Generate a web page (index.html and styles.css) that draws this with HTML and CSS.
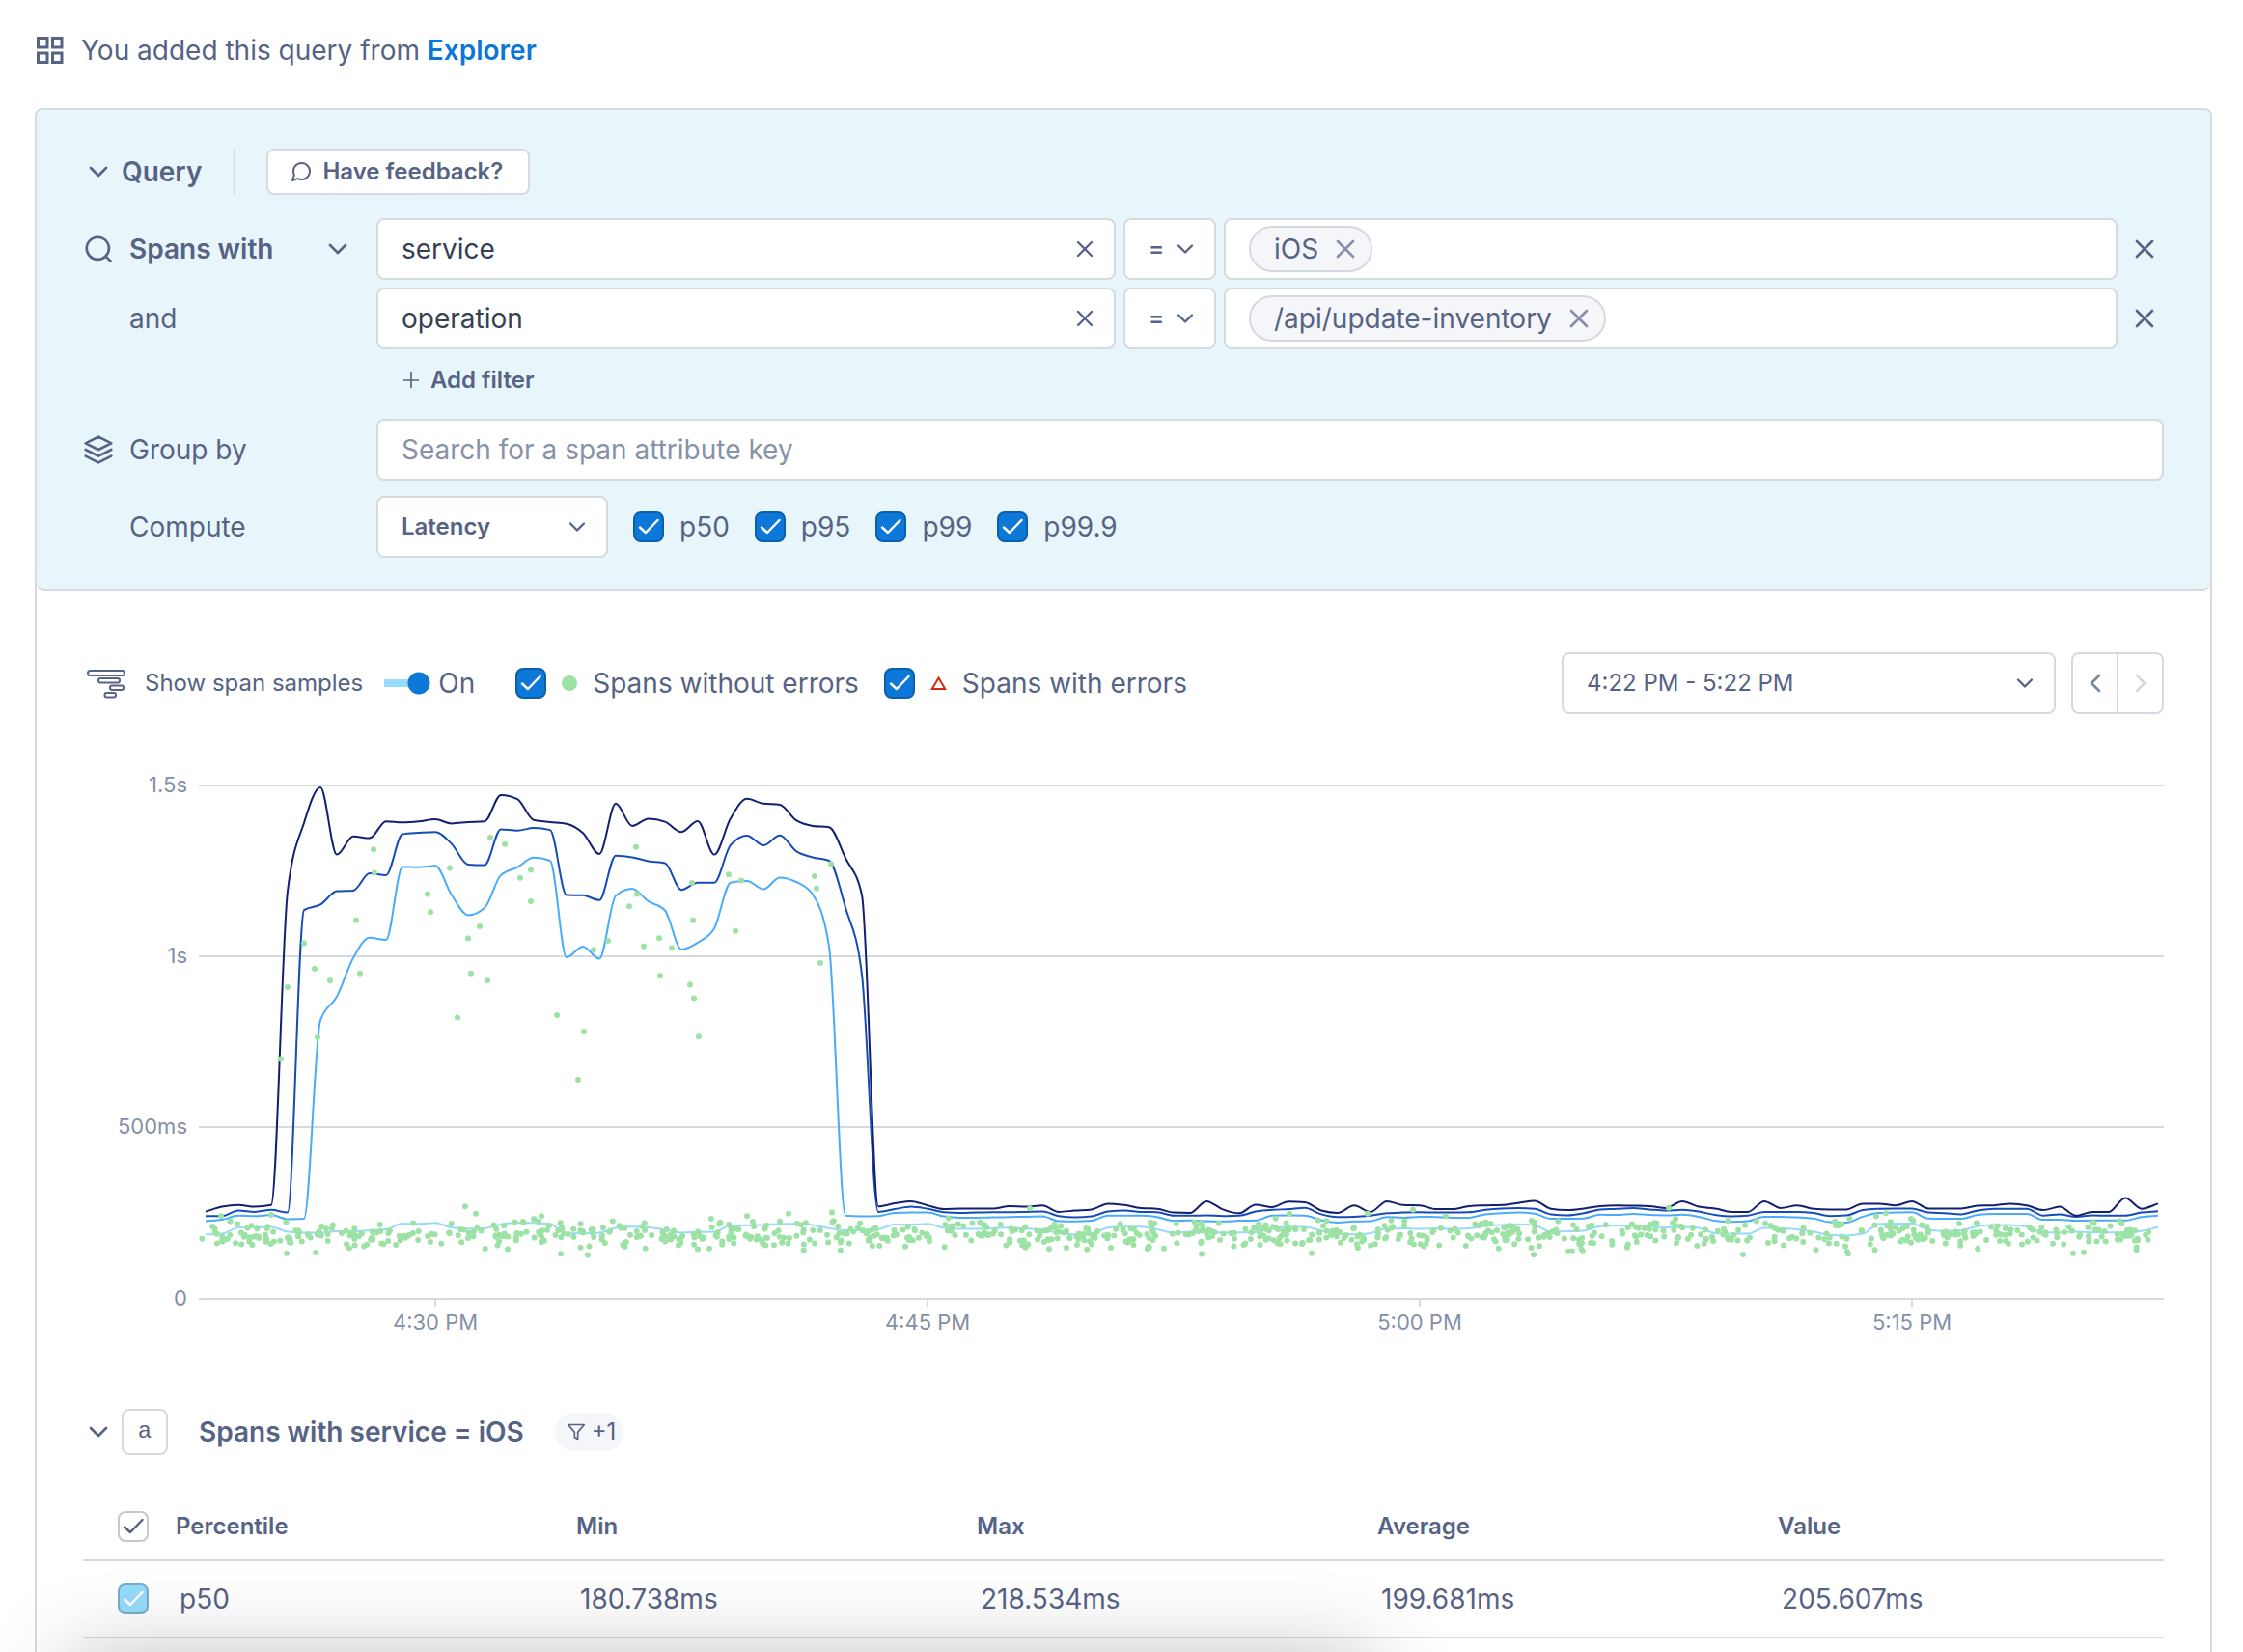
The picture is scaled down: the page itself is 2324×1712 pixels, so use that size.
FILE: index.html
```html
<!DOCTYPE html>
<html lang="en">
<head>
    <meta charset="UTF-8">
    <title>Query</title>
    <meta name="viewport" content="width=device-width, initial-scale=1.0">
    <link rel="stylesheet" href="styles.css">
</head>
<body>
    <!-- shared icons -->
    <svg class="sprite" aria-hidden="true">
        <symbol id="chevron-down" viewBox="0 0 24 24"><path d="M6 9l6 6 6-6"/></symbol>
        <symbol id="chevron-left" viewBox="0 0 24 24"><path d="M15 18l-6-6 6-6"/></symbol>
        <symbol id="chevron-right" viewBox="0 0 24 24"><path d="M9 18l6-6-6-6"/></symbol>
        <symbol id="close" viewBox="0 0 24 24"><path d="M18 6L6 18M6 6l12 12"/></symbol>
        <symbol id="plus" viewBox="0 0 24 24"><path d="M12 3v18M3 12h18"/></symbol>
        <symbol id="search" viewBox="0 0 24 24"><circle cx="11.5" cy="11.5" r="8.7"/><path d="M21.5 21.5l-3.8-3.8"/></symbol>
        <symbol id="layers" viewBox="0 0 24 24"><path d="M12 2L2 7l10 5 10-5zM2 17l10 5 10-5M2 12l10 5 10-5"/></symbol>
        <symbol id="message" viewBox="0 0 24 24"><path d="M21 11.5a8.38 8.38 0 0 1-.9 3.8 8.5 8.5 0 0 1-7.6 4.7 8.38 8.38 0 0 1-3.8-.9L3 21l1.9-5.7a8.38 8.38 0 0 1-.9-3.8 8.5 8.5 0 0 1 4.7-7.6 8.38 8.38 0 0 1 3.8-.9h.5a8.48 8.48 0 0 1 8 8z"/></symbol>
        <symbol id="filter" viewBox="0 0 24 24"><path d="M22 3H2l8 9.46V19l4 2v-8.54z"/></symbol>
        <symbol id="grid" viewBox="0 0 32 32"><path d="M3.5 3.5H13V13H3.5zM18.500 3.500H28V13h-9.500zM3.500 19H13v9.500H3.500zM18.500 19H28v9.500h-9.500z"/></symbol>
    </svg>

    <div class="page">
        <p class="notice">
            <svg class="icon"><use href="#grid"/></svg>
            <span>You added this query from <a href="#explorer">Explorer</a></span>
        </p>

        <main class="panel">
            <section class="query">
                <div class="query-head">
                    <button class="toggle-btn" type="button"><svg class="icon"><use href="#chevron-down"/></svg>Query</button>
                    <button class="feedback" type="button"><svg class="icon icon-s"><use href="#message"/></svg>Have feedback?</button>
                </div>

                <div class="row">
                    <button class="row-label spans-btn" type="button">
                        <svg class="icon"><use href="#search"/></svg>Spans with
                        <svg class="icon push"><use href="#chevron-down"/></svg>
                    </button>
                    <div class="filter">
                        <div class="field">
                            <input class="box" type="text" value="service" aria-label="Attribute key">
                            <button class="clear" type="button" aria-label="Clear key"><svg class="icon icon-m"><use href="#close"/></svg></button>
                        </div>
                        <div class="field">
                            <select class="box" aria-label="Operator"><option>=</option><option>!=</option></select>
                            <svg class="icon icon-m arrow"><use href="#chevron-down"/></svg>
                        </div>
                        <div class="box values">
                            <span class="tag">iOS<button type="button" aria-label="Remove iOS"><svg class="icon"><use href="#close"/></svg></button></span>
                        </div>
                        <button class="remove" type="button" aria-label="Remove filter"><svg class="icon"><use href="#close"/></svg></button>
                    </div>
                </div>

                <div class="row row-and">
                    <span class="row-label no-icon">and</span>
                    <div class="filter">
                        <div class="field">
                            <input class="box" type="text" value="operation" aria-label="Attribute key">
                            <button class="clear" type="button" aria-label="Clear key"><svg class="icon icon-m"><use href="#close"/></svg></button>
                        </div>
                        <div class="field">
                            <select class="box" aria-label="Operator"><option>=</option><option>!=</option></select>
                            <svg class="icon icon-m arrow"><use href="#chevron-down"/></svg>
                        </div>
                        <div class="box values">
                            <span class="tag">/api/update-inventory<button type="button" aria-label="Remove /api/update-inventory"><svg class="icon"><use href="#close"/></svg></button></span>
                        </div>
                        <button class="remove" type="button" aria-label="Remove filter"><svg class="icon"><use href="#close"/></svg></button>
                    </div>
                </div>

                <div class="row row-add">
                    <span></span>
                    <button class="add-filter" type="button"><svg class="icon icon-xs"><use href="#plus"/></svg>Add filter</button>
                </div>

                <div class="row">
                    <label class="row-label" for="groupBy"><svg class="icon"><use href="#layers"/></svg>Group by</label>
                    <input class="box" id="groupBy" type="text" placeholder="Search for a span attribute key">
                </div>

                <div class="row row-compute">
                    <label class="row-label no-icon" for="compute">Compute</label>
                    <div class="compute">
                        <div class="field latency">
                            <select class="box" id="compute"><option>Latency</option><option>Rate</option></select>
                            <svg class="icon icon-m arrow"><use href="#chevron-down"/></svg>
                        </div>
                        <label class="check"><input type="checkbox" checked>p50</label>
                        <label class="check"><input type="checkbox" checked>p95</label>
                        <label class="check"><input type="checkbox" checked>p99</label>
                        <label class="check"><input type="checkbox" checked>p99.9</label>
                    </div>
                </div>
            </section>

            <section class="results">
                <div class="toolbar">
                    <svg class="spans-icon" viewBox="0 0 48 32">
                        <rect x="5" y="3" width="38" height="5" rx="2.500"/>
                        <rect x="16" y="11" width="22" height="4.500" rx="2"/>
                        <rect x="28" y="18.500" width="14" height="4.500" rx="2"/>
                        <rect x="22.500" y="26" width="11.500" height="4.500" rx="2"/>
                    </svg>
                    <label class="samples-label" for="samples">Show span samples</label>
                    <input class="switch" id="samples" type="checkbox" role="switch" checked>
                    <span class="on">On</span>
                    <label class="check legend"><input type="checkbox" checked><span class="dot"></span>Spans without errors</label>
                    <label class="check legend"><input type="checkbox" checked>
                        <svg class="triangle" viewBox="0 0 17 16"><path d="M8.500 2.500L15.200 14H1.800z"/></svg>Spans with errors</label>
                    <div class="field time">
                        <select class="box" aria-label="Time range"><option>4:22 PM - 5:22 PM</option></select>
                        <svg class="icon icon-m arrow"><use href="#chevron-down"/></svg>
                    </div>
                    <div class="nav">
                        <button type="button" aria-label="Earlier"><svg class="icon"><use href="#chevron-left"/></svg></button>
                        <button type="button" aria-label="Later" disabled><svg class="icon"><use href="#chevron-right"/></svg></button>
                    </div>
                </div>

                <svg class="chart" id="chart" viewBox="0 0 2156 620" role="img" aria-label="Latency by percentile"></svg>

                <div class="series-head">
                    <button class="toggle-btn" type="button" aria-label="Collapse"><svg class="icon"><use href="#chevron-down"/></svg></button>
                    <span class="letter">a</span>
                    <h2>Spans with service = iOS</h2>
                    <span class="chip"><svg class="icon icon-xs"><use href="#filter"/></svg>+1</span>
                </div>

                <table class="stats">
                    <colgroup><col class="col-check"><col class="col-stat"><col class="col-stat"><col class="col-stat"><col class="col-stat"><col></colgroup>
                    <thead>
                        <tr>
                            <th><input class="plain" type="checkbox" aria-label="Select all" checked></th>
                            <th>Percentile</th><th>Min</th><th>Max</th><th>Average</th><th>Value</th>
                        </tr>
                    </thead>
                    <tbody>
                        <tr>
                            <td><input class="p50" type="checkbox" aria-label="p50" checked></td>
                            <td>p50</td><td>180.738ms</td><td>218.534ms</td><td>199.681ms</td><td>205.607ms</td>
                        </tr>
                    </tbody>
                </table>
            </section>
        </main>
    </div>
    <div class="bottom-shadow"></div>
    <script src="chart.js"></script>
</body>
</html>
```

FILE: styles.css
```css
* {
    box-sizing: border-box;
}
body {
    margin: 0;
    background: #fff;
    color: #566384;
    font-family: Inter, "Open Sans", sans-serif;
    font-size: 28px;
    line-height: 40px;
}
button, input, select {
    margin: 0;
    font: inherit;
    color: inherit;
}
button {
    padding: 0;
    border: none;
    background: none;
    cursor: pointer;
}
a {
    color: #0b76d7;
    font-weight: 600;
    text-decoration: none;
}

/* icons */
.sprite {
    display: none;
}
.icon {
    flex: none;
    display: block;
    width: 32px;
    height: 32px;
    fill: none;
    stroke: currentColor;
    stroke-width: 2;
    stroke-linecap: round;
    stroke-linejoin: round;
}
.icon-m {
    width: 28px;
    height: 28px;
}
.icon-s {
    width: 24px;
    height: 24px;
}
.icon-xs {
    width: 20px;
    height: 20px;
}

.page {
    display: flex;
    flex-direction: column;
    min-height: 100vh;
    padding: 32px 32px 0 36px;
}
.notice {
    display: flex;
    align-items: center;
    gap: 16px;
    margin: 0 0 40px;
}
.notice .icon {
    stroke-width: 3;
    stroke-linejoin: miter;
}
.panel {
    flex: 1;
    border: 2px solid #d5dae1;
    border-bottom: none;
    border-radius: 8px 8px 0 0;
}

/* query builder */
.query {
    padding: 40px 48px 32px;
    background: #e8f6fc;
    border-bottom: 2px solid #d5dae1;
    border-radius: 6px 6px 8px 8px;
}
.query-head {
    display: flex;
    align-items: center;
    margin-bottom: 24px;
}
.toggle-btn {
    display: flex;
    align-items: center;
    gap: 8px;
    font-weight: 600;
}
.query-head .toggle-btn {
    height: 48px;
    padding-right: 33px;
    margin-right: 32px;
    border-right: 2px solid #d5dae1;
}
.feedback {
    display: flex;
    align-items: center;
    gap: 10px;
    height: 48px;
    padding: 0 26px 0 22px;
    background: #fff;
    border: 2px solid #d5dae1;
    border-radius: 8px;
    font-size: 24px;
    font-weight: 600;
}
.row {
    display: grid;
    grid-template-columns: 304px 1fr;
    align-items: center;
}
.row-and {
    margin-top: 8px;
}
.row-add {
    height: 72px;
    padding-bottom: 8px;
}
.row-compute {
    margin-top: 16px;
}
.row-label {
    display: flex;
    align-items: center;
    gap: 16px;
}
.no-icon {
    padding-left: 48px;
}
.spans-btn {
    padding-right: 24px;
    font-weight: 600;
}
.push {
    margin-left: auto;
}
.filter {
    display: grid;
    grid-template-columns: 766fr 96px 926fr 40px;
    gap: 8px;
}
.box {
    width: 100%;
    min-width: 0;
    height: 64px;
    padding: 0 24px;
    background: #fff;
    border: 2px solid #d5dae1;
    border-radius: 8px;
    outline: none;
}
input.box {
    color: #363f55;
}
input.box::placeholder {
    color: #8792a9;
    opacity: 1;
}
select.box {
    appearance: none;
    font-size: 24px;
    font-weight: 600;
    cursor: pointer;
}
/* the control and its button or arrow share one grid cell */
.field {
    display: grid;
    align-items: center;
}
.field > * {
    grid-area: 1 / 1;
}
.clear, .arrow {
    justify-self: end;
    margin-right: 18px;
}
.arrow {
    pointer-events: none;
}
.values {
    display: flex;
    align-items: center;
}
.tag {
    display: flex;
    align-items: center;
    gap: 12px;
    height: 48px;
    padding: 0 10px 0 24px;
    background: #f5f6f9;
    border: 2px solid #d5dae1;
    border-radius: 24px;
}
.tag button {
    color: #8490a8;
}
.remove {
    display: grid;
    place-items: center;
}
.add-filter {
    display: flex;
    align-items: center;
    gap: 10px;
    justify-self: start;
    padding-left: 26px;
    font-size: 24px;
    font-weight: 600;
}
.compute {
    display: flex;
    align-items: center;
    gap: 26px;
}
.latency {
    width: 240px;
}
.check {
    display: flex;
    align-items: center;
    gap: 16px;
}
input[type="checkbox"]:not(.switch) {
    appearance: none;
    flex: none;
    display: block;
    width: 32px;
    height: 32px;
    background: #0d78d8 url("data:image/svg+xml,%3Csvg xmlns='http://www.w3.org/2000/svg' viewBox='0 0 32 32'%3E%3Cpath d='M7 16.500l6 5.500L25.500 9' fill='none' stroke='white' stroke-width='2.500' stroke-linecap='round' stroke-linejoin='round'/%3E%3C/svg%3E") center / 32px no-repeat;
    border: 2px solid #0a60ad;
    border-radius: 8px;
}
input[type="checkbox"].plain {
    background: #fff url("data:image/svg+xml,%3Csvg xmlns='http://www.w3.org/2000/svg' viewBox='0 0 32 32'%3E%3Cpath d='M7 16.500l6 5.500L25.500 9' fill='none' stroke='%23566384' stroke-width='2.500' stroke-linecap='round' stroke-linejoin='round'/%3E%3C/svg%3E") center / 32px no-repeat;
    border-color: #c8c8c8;
}
input[type="checkbox"].p50 {
    background-color: #96dbfa;
    border-color: #76aec7;
}

/* results */
.results {
    padding: 64px 48px 0;
}
.toolbar {
    display: flex;
    align-items: center;
}
.spans-icon {
    flex: none;
    width: 48px;
    height: 32px;
    margin-right: 16px;
    fill: none;
    stroke: currentColor;
    stroke-width: 2;
}
.samples-label {
    margin-right: 22px;
    font-size: 24px;
}
.switch {
    appearance: none;
    width: 48px;
    height: 24px;
    margin-right: 8px;
    background:
        radial-gradient(circle at 36px 12px, #0d78d8 11px, transparent 12px),
        linear-gradient(#96dbfa, #96dbfa) left center / 36px 8px no-repeat;
    border-radius: 4px 12px 12px 4px;
}
.on {
    margin-right: 16px;
}
.legend {
    margin-left: 26px;
}
.dot {
    width: 16px;
    height: 16px;
    border-radius: 50%;
    background: #9ce2a5;
}
.triangle {
    width: 17px;
    height: 16px;
    fill: none;
    stroke: #d8290f;
    stroke-width: 2;
}
.time {
    width: 512px;
    margin-left: auto;
    margin-right: 16px;
}
.time .box {
    font-weight: 400;
}
.nav {
    display: flex;
    width: 96px;
    height: 64px;
    border: 2px solid #d5dae1;
    border-radius: 8px;
}
.nav button {
    flex: 1;
    display: grid;
    place-items: center;
    color: #7c88a3;
}
.nav button + button {
    border-left: 2px solid #d5dae1;
    color: #d5dae1;
}

/* chart */
.chart {
    display: block;
    width: 100%;
    margin-top: 40px;
}
.chart .grid {
    stroke: #d5dae1;
    stroke-width: 2;
}
.chart text {
    fill: #8490a8;
    font-size: 22px;
}
.chart .series {
    fill: none;
    stroke-width: 2;
    stroke-linejoin: round;
}
.chart .sample {
    fill: #9ce2a5;
}

/* stats table */
.series-head {
    display: flex;
    align-items: center;
    margin-top: 60px;
}
.letter {
    width: 48px;
    height: 48px;
    margin: 0 32px 0 8px;
    border: 2px solid #d5dae1;
    border-radius: 8px;
    font-family: "Liberation Mono", monospace;
    font-size: 24px;
    line-height: 44px;
    text-align: center;
}
.series-head h2 {
    margin: 0 32px 0 0;
    font-size: 28px;
    font-weight: 600;
}
.chip {
    display: flex;
    align-items: center;
    gap: 6px;
    height: 40px;
    padding: 0 8px 0 12px;
    background: #f5f6f9;
    border-radius: 20px;
    font-size: 24px;
}
.stats {
    width: 100%;
    margin-top: 40px;
    table-layout: fixed;
    border-collapse: separate;
    border-spacing: 0;
}
.col-check {
    width: 96px;
}
.col-stat {
    width: 19.25%;
}
.stats th, .stats td {
    padding: 0;
    border-bottom: 2px solid #d5dae1;
    text-align: left;
}
.stats th {
    height: 70px;
    font-size: 24px;
    font-weight: 600;
}
.stats td {
    height: 80px;
    padding-left: 4px;
}
.stats th:first-child, .stats td:first-child {
    padding-left: 36px;
}

.bottom-shadow {
    position: fixed;
    top: 100%;
    left: 72px;
    width: 58vw;
    height: 160px;
    box-shadow: 0 8px 90px rgba(0, 0, 0, 0.28);
    pointer-events: none;
}
```

FILE: chart.js
```js
const NS = 'http://www.w3.org/2000/svg';
const chart = document.getElementById('chart');

// plot area inside the viewBox
const LEFT = 120, RIGHT = 2156, TOP = 34, BOTTOM = 566;
const STEP = 17, START = 127;

// one value every 30 seconds, in ms
const series = [
    { name: 'p50', color: '#96dbfa', data: [
        188,190,208,209,210,196,193,193,197,197,200,203,220,219,222,208,205,206,218,223,222,219,191,191,193,207,211,209,202,193,
        195,196,214,215,216,219,219,216,206,200,200,203,217,217,219,207,204,204,206,208,205,202,192,188,191,208,211,211,203,193,
        196,196,193,194,194,206,210,210,199,190,188,192,205,206,204,206,204,206,213,216,218,215,196,197,199,212,214,213,212,208,
        210,207,192,190,190,207,206,203,196,187,185,190,219,220,220,202,198,200,212,216,216,211,194,194,196,194,194,194,198,210] },
    { name: 'p95', color: '#4aabfb', data: [
        227,231,243,242,245,233,234,814,883,996,1055,1049,1262,1261,1265,1180,1121,1142,1238,1261,1289,1280,998,1029,994,1178,1198,1161,1135,1021,
        1041,1082,1216,1221,1197,1231,1218,1182,1029,243,241,242,251,252,252,241,237,237,238,239,240,241,227,226,228,243,243,243,239,228,
        229,227,226,228,229,243,244,243,230,223,226,227,239,237,240,239,237,237,247,250,252,249,234,234,235,246,245,248,245,244,
        246,240,228,225,227,240,240,238,235,224,223,240,251,252,253,235,234,234,245,248,248,248,231,231,228,229,229,229,239,243] },
    { name: 'p99', color: '#154cb8', data: [
        242,242,258,254,260,252,1136,1152,1191,1193,1243,1238,1358,1362,1364,1329,1269,1267,1372,1368,1376,1370,1180,1179,1165,1295,1290,1279,1273,1195,
        1216,1216,1326,1353,1325,1354,1308,1290,1280,1143,948,254,262,269,263,253,251,252,253,253,254,255,242,238,241,255,258,254,253,243,
        243,244,242,243,255,260,262,266,247,239,240,243,250,252,253,252,252,253,260,264,265,263,247,244,250,261,263,265,261,258,
        260,255,245,241,243,254,254,254,251,242,244,259,263,264,264,252,250,247,258,263,263,263,243,247,240,244,243,243,252,256] },
    { name: 'p99.9', color: '#131f70', data: [
        255,269,274,269,274,1191,1391,1494,1298,1351,1346,1395,1392,1395,1401,1389,1393,1395,1472,1460,1399,1393,1388,1361,1300,1447,1382,1403,1394,1364,
        1396,1298,1404,1461,1447,1444,1398,1382,1378,1288,1180,270,279,285,273,262,264,264,264,271,269,273,254,258,261,278,274,265,263,252,
        251,285,261,250,275,268,284,282,258,251,273,254,285,274,273,262,262,271,273,274,280,286,263,259,264,271,273,272,271,265,
        285,269,264,254,254,285,265,273,263,261,261,278,278,273,285,264,264,264,272,273,278,273,259,269,243,254,254,295,263,278] }
];

// sampled spans away from the main band: [x, ms]
const outliers = [
    [85,701],[92,911],[109,1039],[120,964],[123,764],[136,930],[163,1106],[167,951],[181,1313],[182,1245],[237,1183],[240,1130],
    [260,1259],[268,822],[279,1053],[282,951],[291,1088],[299,930],[302,1348],[317,1329],[333,1230],[344,1253],[344,1162],[371,829],
    [393,640],[399,781],[409,1020],[424,1046],[446,1147],[453,1320],[454,1183],[461,1030],[477,1054],[478,944],[490,1025],[509,918],
    [511,1215],[512,1106],[513,878],[518,766],[549,1240],[556,1075],[562,1222],[638,1235],[640,1199],[644,981],[655,1271],
    [276,270],[287,249],[23,242],[75,245],[91,133],[121,135],[347,233],[355,242],[375,132],[403,128],[517,145],[568,242],[611,249],
    [656,252],[861,264],[1039,131],[1153,133],[1130,249],[1211,249],[1258,260],[1292,242],[1383,129],[881,146],[1523,266],[1600,130],
    [1709,132],[1708,138],[1419,139],[1423,139],[1434,139],[1748,250],[1738,241],[1942,133],[1953,136],[1774,234]
];

function add(tag, attrs, text) {
    const el = document.createElementNS(NS, tag);
    for (const key in attrs) el.setAttribute(key, attrs[key]);
    if (text) el.textContent = text;
    chart.appendChild(el);
}

function yOf(ms) {
    return BOTTOM - ms * (BOTTOM - TOP) / 1500;
}

// monotone cubic path, so the curve never overshoots a value
function linePath(values) {
    const ys = values.map(yOf);
    const slope = i => (ys[i + 1] - ys[i]) / STEP;
    const tangents = ys.map((y, i) => {
        if (i === 0) return slope(0);
        if (i === ys.length - 1) return slope(i - 1);
        const a = slope(i - 1), b = slope(i);
        if (a * b <= 0) return 0;
        return Math.sign(a) * Math.min(Math.abs(a), Math.abs(b), Math.abs(a + b) / 4) * 2;
    });
    let d = 'M' + START + ',' + ys[0].toFixed(1);
    for (let i = 1; i < ys.length; i++) {
        const x0 = START + (i - 1) * STEP, x1 = x0 + STEP, t = STEP / 3;
        d += 'C' + [x0 + t, ys[i - 1] + tangents[i - 1] * t, x1 - t, ys[i] - tangents[i] * t, x1, ys[i]]
            .map(n => n.toFixed(1)).join(',');
    }
    return d;
}

// grid and axes
[[1500, '1.5s'], [1000, '1s'], [500, '500ms'], [0, '0']].forEach(([ms, label]) => {
    const y = Math.floor(yOf(ms));
    add('line', { class: 'grid', x1: LEFT, x2: RIGHT, y1: y, y2: y });
    add('text', { x: 108, y: y + 7, 'text-anchor': 'end' }, label);
});
['4:30 PM', '4:45 PM', '5:00 PM', '5:15 PM'].forEach((label, i) => {
    const x = 365 + i * 510;
    add('line', { class: 'grid', x1: x, x2: x, y1: BOTTOM, y2: BOTTOM + 8 });
    add('text', { x: x, y: 598, 'text-anchor': 'middle' }, label);
});

series.forEach(s => add('path', { class: 'series', d: linePath(s.data), stroke: s.color }));

outliers.forEach(([x, ms]) => add('circle', { class: 'sample', cx: LEFT + x, cy: yOf(ms), r: 3 }));

// the dense band of fast spans
let seed = 20;
function rand() {
    seed = (seed * 16807) % 2147483647;
    return seed / 2147483647;
}
for (let i = 0; i < 900; i++) {
    const x = LEFT + 3 + rand() * 2024;
    const ms = 140 + (rand() + rand()) / 2 * 96;
    add('circle', { class: 'sample', cx: x.toFixed(1), cy: yOf(ms).toFixed(1), r: 3 });
}
```
